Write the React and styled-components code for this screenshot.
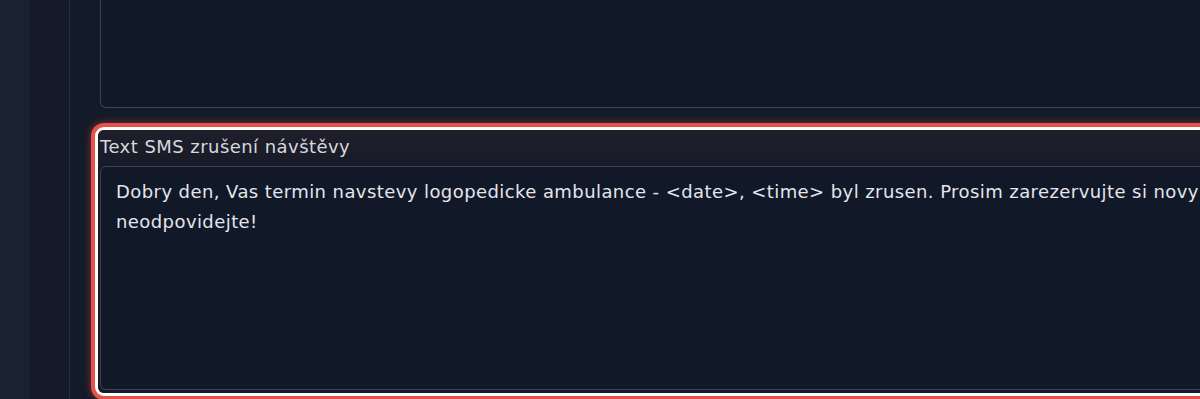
import styled, { createGlobalStyle } from "styled-components";

const Global = createGlobalStyle`
  html, body {
    margin: 0;
    padding: 0;
    background: #131a28;
    overflow: hidden;
  }
  * { box-sizing: border-box; }
`;

export default function App() {
  return (
    <>
      <Global />
      <Page>
        <Sidebar />
        <Gutter />
        <Main>
          <TopArea readOnly value="" />
          <Highlight>
            <Label>Text SMS zrušení návštěvy</Label>
            <Area
              readOnly
              value="Dobry den, Vas termin navstevy logopedicke ambulance - <date>, <time> byl zrusen. Prosim zarezervujte si novy termin. Na tuto zpravu neodpovidejte!"
            />
          </Highlight>
        </Main>
      </Page>
    </>
  );
}

const Page = styled.div`
  display: flex;
  width: 1200px;
  height: 399px;
  overflow: hidden;
  font-family: "DejaVu Sans", "Liberation Sans", sans-serif;
`;

const Sidebar = styled.div`
  width: 30px;
  background: #1a2130;
  flex-shrink: 0;
`;

const Gutter = styled.div`
  width: 40px;
  background: #141a27;
  border-right: 1px solid #283040;
  flex-shrink: 0;
`;

const Main = styled.div`
  flex-shrink: 0;
  display: flex;
  flex-direction: column;
  padding-left: 30px;
  gap: 22px;
  width: 1420px;
`;

const TopArea = styled.textarea`
  display: block;
  height: 108px;
  width: 100%;
  background: #111827;
  border: 1px solid #3b4452;
  border-top: none;
  border-radius: 0 0 6px 6px;
  resize: none;
  outline: none;
`;

const Highlight = styled.div`
  display: flex;
  flex-direction: column;
  gap: 6px;
  margin-left: -2px;
  padding: 4px 0 3px 2px;
  height: 263px;
  background: linear-gradient(180deg, #1f1f2a 0%, #161b27 40px);
  border-radius: 6px;
  box-shadow: 0 0 0 3px #ffffff, 0 0 0 7px #e5534b, 0 0 7px 8px rgba(229, 83, 75, 0.4);
`;

const Label = styled.label`
  font-size: 18px;
  line-height: 26px;
  color: #d6d9df;
  letter-spacing: 0.45px;
`;

const Area = styled.textarea`
  flex: 1;
  width: 100%;
  background: #111827;
  border: 1px solid #3b4452;
  border-radius: 6px;
  padding: 10px 15px;
  font-family: inherit;
  font-size: 18px;
  line-height: 30px;
  letter-spacing: 0.42px;
  color: #e3e6ec;
  resize: none;
  outline: none;
`;
